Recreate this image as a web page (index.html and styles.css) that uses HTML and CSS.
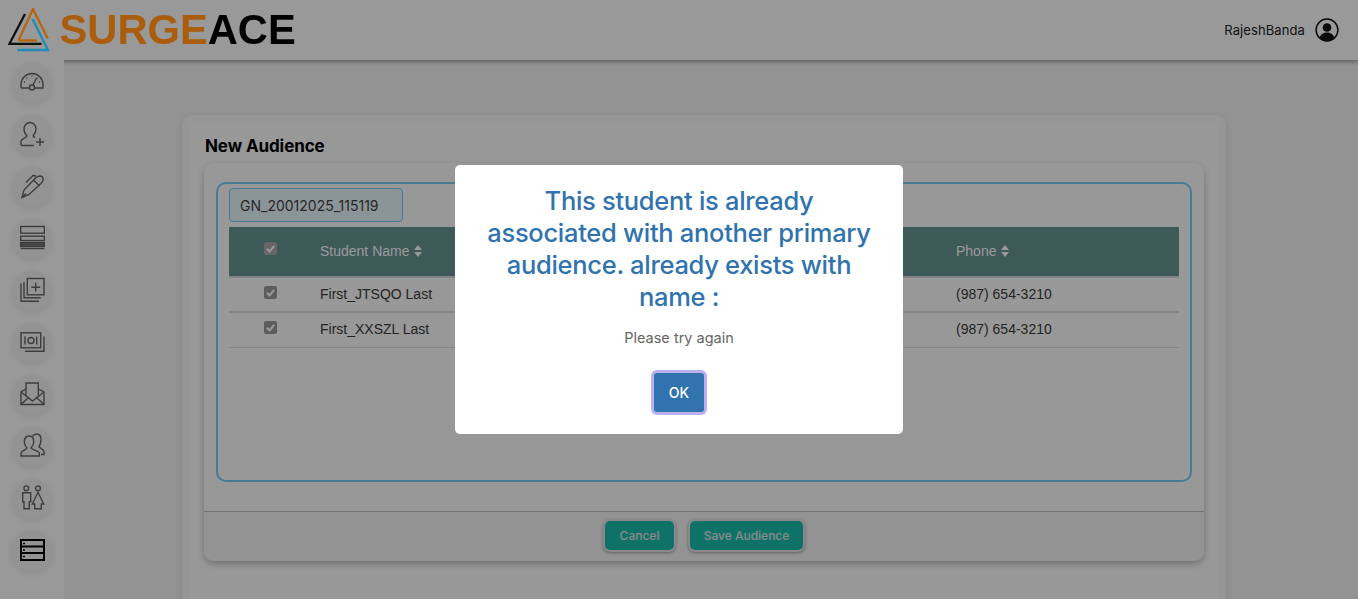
FILE: index.html
```html
<!DOCTYPE html>
<html lang="en">
<head>
<meta charset="utf-8">
<title>SurgeAce</title>
<link rel="stylesheet" href="styles.css">
</head>
<body>
<header class="topbar">
  <div class="logo">
    <svg class="logo-mark" width="44" height="44" viewBox="8 8 44 44" fill="none" stroke-width="2.300">
      <path d="M25 14 9.500 43.800H41.500" stroke="#101010"/>
      <path d="M18.500 40.500 33 9 47.800 38.500M18.500 40.500H37" stroke="#b5660f"/>
      <path d="M32.500 19 48 50H17.500" stroke="#1d8cb4"/>
    </svg>
    <span class="logo-text"><span class="logo-surge">SURGE</span>ACE</span>
  </div>
  <div class="user">
    <span class="user-name">RajeshBanda</span>
    <svg width="24" height="24" viewBox="0 0 24 24"><circle cx="12" cy="12" r="10.900" fill="none" stroke="#111" stroke-width="1.500"/><circle cx="12" cy="9.500" r="4.300" fill="#111"/><path d="M4.500 20c1-4 4.500-5.500 7.500-5.500s6.500 1.500 7.500 5.500a11 11 0 0 1-15 0z" fill="#111"/></svg>
  </div>
</header>
<div class="shell">
  <nav class="sidebar">
    <a class="nav-btn"><svg viewBox="0 0 26 26"><path d="M2 19v-3.500a11 11 0 0 1 22 0V19h-8M10 19H2"/><path d="M14 16l3.500-7"/><circle cx="13" cy="18.500" r="2.500"/><path d="M13 6.500v1M7.500 8.500l.6.8M18.500 8.500l-.6.8M5 13l.9.300M21 13l-.9.300"/></svg></a>
    <a class="nav-btn"><svg viewBox="0 0 26 26"><path d="M2 24.500V20c0-2 5-3 6-5-2-2-3-4-3-7 0-4 3-6.500 6-6.500s6 2.500 6 6.500c0 3-1 5-3 7 .2.500 1 1 2 1.500M2 24.500h13"/><path d="M21 17v8M17 21h8"/></svg></a>
    <a class="nav-btn"><svg viewBox="0 0 26 26"><path d="M3 24.500 5 17 16 5.500c2-2 4.500-3 7-2 2 2 1 5-1 7L10 21.500z"/><path d="M3 24.500l4-4M7 9.500l7-7 3 .5M14.500 7l6 6"/></svg></a>
    <a class="nav-btn"><svg viewBox="0 0 26 26"><rect x="1.700" y="1.500" width="23.600" height="6.700"/><rect x="1.700" y="11.200" width="23.600" height="4.300"/><rect class="icon-fill" x="1.700" y="17.500" width="23.600" height="4"/><path d="M1.700 23.500h23.600"/></svg></a>
    <a class="nav-btn"><svg viewBox="0 0 26 26"><rect x="8.300" y="1.500" width="16.700" height="16.300"/><path d="M16.700 5.700v9M12.200 10.200h9M5 5v15.800h16.700M2 6.500v17.700h18"/></svg></a>
    <a class="nav-btn"><svg viewBox="0 0 26 26"><rect x="2" y="3.800" width="19.700" height="15"/><circle cx="12" cy="11.500" r="3"/><path d="M6 7.500v8M17.700 7.500v8M25 7.500v14.700H6"/></svg></a>
    <a class="nav-btn"><svg viewBox="0 0 26 26"><path d="M7 8 2 11v12.500h23V11l-5.700-3"/><path d="M7 14.500V2h12.300v12.500M2 11l11.500 9L25 11M2 23.500l8-7.500M25 23.500 17 16"/></svg></a>
    <a class="nav-btn"><svg viewBox="0 0 26 26"><path d="M2 23v-3c0-2 5-3 6-5-2-2-2.700-3.500-2.700-6 0-4 2.200-6 4.700-6s4.700 2 4.700 6c0 2.500-.7 4-2.700 6 1 2 8.300 3 8.300 5v3z"/><path d="M13.500 3.500C14.500 2 16 1 17.500 1c3 0 4.500 2.500 4.500 5.500 0 3-.5 5-2 7 .5 2 5 2 5 5.500v2.500h-3"/></svg></a>
    <a class="nav-btn"><svg viewBox="0 0 26 26"><circle cx="7.300" cy="3.300" r="2.400"/><circle cx="19" cy="3.300" r="2.400"/><path d="M3.700 7.700h8v9H10.300v7H5v-7H3.700zM19 7.300 24.700 19h-2.400v4.700h-6.600V19h-2.400z"/></svg></a>
    <a class="nav-btn nav-btn-active"><svg viewBox="0 0 26 26"><rect x="2" y="3" width="23" height="20"/><path d="M2 9.500h23M2 16h23"/><path d="M4 6.500h2M4 13h2M4 19.500h2" stroke-width="1.500"/></svg></a>
  </nav>
  <main class="main">
    <section class="outer-card">
      <div class="outer-inner">
        <h1 class="page-title">New Audience</h1>
        <div class="panel">
          <div class="panel-body">
            <div class="group-box">
              <input class="name-input" type="text" value="GN_20012025_115119" readonly>
              <table class="students">
                <thead>
                  <tr>
                    <th class="col-check"><span class="check check-head"><svg viewBox="0 0 13 13"><path d="M2.800 6.800l2.700 2.700 4.700-5.700"/></svg></span></th>
                    <th class="col-name">Student Name <svg class="sort" viewBox="0 0 10 14"><path d="M1 6h8L5 1zM1 8h8l-4 5z"/></svg></th>
                    <th class="col-mid"></th>
                    <th class="col-phone">Phone <svg class="sort" viewBox="0 0 10 14"><path d="M1 6h8L5 1zM1 8h8l-4 5z"/></svg></th>
                  </tr>
                </thead>
                <tbody>
                  <tr>
                    <td class="col-check"><span class="check"><svg viewBox="0 0 13 13"><path d="M2.800 6.800l2.700 2.700 4.700-5.700"/></svg></span></td>
                    <td>First_JTSQO Last</td>
                    <td></td>
                    <td>(987) 654-3210</td>
                  </tr>
                  <tr>
                    <td class="col-check"><span class="check"><svg viewBox="0 0 13 13"><path d="M2.800 6.800l2.700 2.700 4.700-5.700"/></svg></span></td>
                    <td>First_XXSZL Last</td>
                    <td></td>
                    <td>(987) 654-3210</td>
                  </tr>
                </tbody>
              </table>
            </div>
          </div>
          <div class="panel-footer">
            <button class="btn-teal btn-cancel" type="button">Cancel</button>
            <button class="btn-teal btn-save" type="button">Save Audience</button>
          </div>
        </div>
      </div>
    </section>
  </main>
</div>
<div class="overlay">
  <div class="dialog" role="dialog">
    <h2 class="dialog-title">This student is already associated with another primary audience. already exists with name :</h2>
    <p class="dialog-text">Please try again</p>
    <button class="dialog-ok" type="button">OK</button>
  </div>
</div>
</body>
</html>
```
FILE: styles.css
```css
* { box-sizing: border-box; }
html, body { height: 100%; }
body {
  margin: 0;
  height: 599px;
  overflow: hidden;
  background: #f5f5f5;
  font-family: "Liberation Sans", Arial, sans-serif;
  color: #333;
}
.topbar {
  height: 60px;
  background: #fff;
  display: flex;
  align-items: center;
  justify-content: space-between;
  padding: 0 19px 0 8px;
  box-shadow: 0 2px 4px rgba(0,0,0,.35);
  position: relative;
}
.logo {
  display: flex;
  align-items: center;
  gap: 7.500px;
  position: relative;
  z-index: 20;
}
.logo-mark { display: block; }
.logo-text {
  font-weight: 700;
  font-size: 41.700px;
  color: #000;
  line-height: 60px;
}
.logo-surge { color: #a95d0d; }
.user { display: flex; align-items: center; gap: 10px; }
.user-name {
  font-family: Inter, sans-serif;
  font-size: 13px;
  color: #222;
  letter-spacing: .1px;
}
.shell { display: flex; height: 539px; }
.sidebar {
  width: 64px;
  background: #ffffff;
  display: flex;
  flex-direction: column;
  align-items: center;
  gap: 12px;
  padding-top: 1.500px;
  flex: none;
  position: relative;
}
.nav-btn {
  width: 40px;
  height: 40px;
  border-radius: 50%;
  background: #f5f5f5;
  box-shadow: 0 3px 6px rgba(0,0,0,.08);
  border: 1px solid #fafafa;
  display: flex;
  align-items: center;
  justify-content: center;
  flex: none;
}
.nav-btn svg {
  width: 26px;
  height: 26px;
  fill: none;
  stroke: #666;
  stroke-width: 1.400;
  flex: none;
}
.nav-btn svg .icon-fill { fill: #777; }
.nav-btn-active { width: 42px; height: 42px; margin: -1px 0; }
.nav-btn-active svg { stroke: #000; stroke-width: 2; }
.main {
  flex: 1;
  background: #f5f5f5;
  padding: 55px 132px 0 118px;
  overflow: hidden;
  min-width: 0;
}
.outer-card {
  background: #fafafa;
  border-radius: 10px;
  padding: 8px 8px 0;
  height: 600px;
  box-shadow: 0 2px 6px rgba(0,0,0,.1);
}
.outer-inner {
  background: #fdfdfd;
  padding: 12px 14px 0;
  height: 100%;
}
.page-title {
  margin: 0 0 6px 1px;
  font-family: Inter, sans-serif;
  font-size: 17px;
  line-height: 22px;
  font-weight: 700;
  color: #000;
  letter-spacing: -.1px;
}
.panel {
  height: 398px;
  background: #fdfdfd;
  border-radius: 10px;
  box-shadow: 0 3px 6px rgba(0,0,0,.25);
  display: flex;
  flex-direction: column;
}
.panel-body { padding: 19px 12px 0; height: 349px; border-bottom: 1px solid #bdbdbd; }
.group-box {
  height: 300px;
  border: 2px solid #7bcdfa;
  border-radius: 10px;
  padding: 4px 11px 0;
}
.name-input {
  display: block;
  width: 174px;
  height: 34px;
  border: 1px solid #7bcdfa;
  border-radius: 4px;
  background: #e8f8fc;
  padding: 0 10px;
  font-family: Inter, sans-serif;
  font-size: 14px;
  color: #444;
  margin-bottom: 5px;
}
.students {
  width: 950px;
  border-collapse: collapse;
  table-layout: fixed;
  font-size: 14px;
}
.students th {
  background: #669693;
  color: #fff;
  font-weight: 400;
  text-align: left;
  height: 50px;
  padding: 0 0 2px;
  border-bottom: 2px solid #dadada;
  vertical-align: middle;
}
.students td {
  height: 35px;
  padding: 0 0 2px;
  border-bottom: 2px solid #dcdcdc;
  color: #3c3c3c;
}
.students tbody tr:last-child td { border-bottom-width: 1px; }
.students .col-check { width: 91px; padding-left: 35px; }
.col-name { width: 240px; }
.col-mid { width: 396px; }
.col-phone { width: 223px; }
.check {
  display: inline-block;
  width: 13px;
  height: 13px;
  background: #9c9c9c;
  border-radius: 2px;
  vertical-align: middle;
  margin-bottom: 3px;
}
.check svg {
  display: block;
  width: 13px;
  height: 13px;
  fill: none;
  stroke: #fff;
  stroke-width: 2;
}
.check-head { background: #aaa; margin-bottom: 5px; }
.sort {
  display: inline-block;
  width: 10px;
  height: 14px;
  fill: #fff;
  vertical-align: -2px;
}
.panel-footer {
  flex: 1;
  display: flex;
  justify-content: center;
  gap: 12px;
  padding-top: 7px;
  background: #f6f6f6;
  border-radius: 0 0 10px 10px;
}
.btn-teal {
  height: 33px;
  padding: 0;
  background: #19bfae;
  color: #e6e6e6;
  border: 2px solid #e4e4e4;
  border-radius: 7px;
  box-shadow: 0 1px 3px rgba(0,0,0,.35);
  font-family: Inter, sans-serif;
  font-size: 12px;
  font-weight: 500;
}
.btn-cancel { width: 73px; }
.btn-save { width: 117px; }
.overlay {
  position: fixed;
  inset: 0;
  background: rgba(0,0,0,.4);
  display: flex;
  justify-content: center;
  align-items: flex-start;
  z-index: 10;
  padding-top: 165px;
}
.dialog {
  width: 448px;
  height: 269px;
  background: #fff;
  border-radius: 5px;
  padding: 20px 28px 0;
  text-align: center;
}
.dialog-title {
  margin: 0;
  font-family: Inter, sans-serif;
  font-size: 25.500px;
  line-height: 32px;
  font-weight: 500;
  color: #3073ae;
  letter-spacing: -.3px;
}
.dialog-text {
  margin: 13px 0 0;
  font-family: Inter, sans-serif;
  font-size: 14.500px;
  line-height: 24px;
  color: #666;
}
.dialog-ok {
  display: block;
  margin: 23px auto 0;
  width: 50px;
  height: 39px;
  background: #3073ae;
  color: #fff;
  border: 0;
  border-radius: 3px;
  box-shadow: 0 0 0 3px #b9b0ee;
  font-family: Inter, sans-serif;
  font-size: 14px;
  font-weight: 500;
}
```
